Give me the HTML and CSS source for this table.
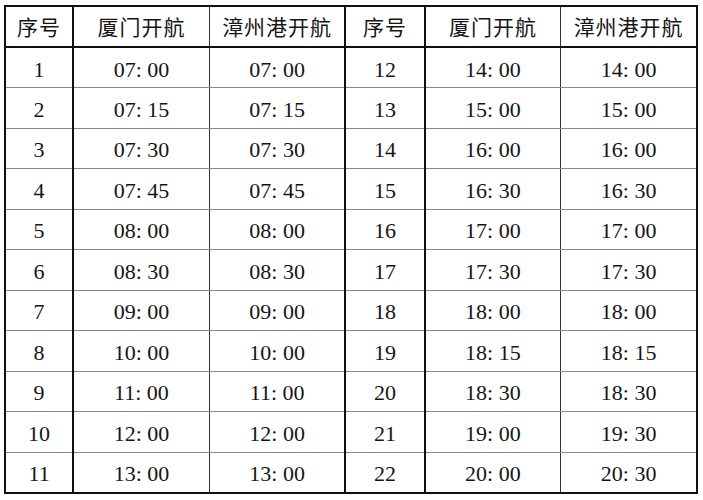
FILE: index.html
```html
<!DOCTYPE html>
<html lang="zh">
<head>
<meta charset="utf-8">
<title>航班时刻表</title>
<link rel="stylesheet" href="styles.css">
</head>
<body>
<table class="schedule">
  <colgroup>
    <col class="c-no"><col class="c-time"><col class="c-time"><col class="c-no2"><col class="c-time"><col class="c-time">
  </colgroup>
  <thead>
    <tr>
      <th class="sep">序号</th><th>厦门开航</th><th class="sep">漳州港开航</th>
      <th class="sep">序号</th><th>厦门开航</th><th>漳州港开航</th>
    </tr>
  </thead>
  <tbody>
    <tr><td class="sep">1</td><td>07: 00</td><td class="sep">07: 00</td><td class="sep">12</td><td>14: 00</td><td>14: 00</td></tr>
    <tr><td class="sep">2</td><td>07: 15</td><td class="sep">07: 15</td><td class="sep">13</td><td>15: 00</td><td>15: 00</td></tr>
    <tr><td class="sep">3</td><td>07: 30</td><td class="sep">07: 30</td><td class="sep">14</td><td>16: 00</td><td>16: 00</td></tr>
    <tr><td class="sep">4</td><td>07: 45</td><td class="sep">07: 45</td><td class="sep">15</td><td>16: 30</td><td>16: 30</td></tr>
    <tr><td class="sep">5</td><td>08: 00</td><td class="sep">08: 00</td><td class="sep">16</td><td>17: 00</td><td>17: 00</td></tr>
    <tr><td class="sep">6</td><td>08: 30</td><td class="sep">08: 30</td><td class="sep">17</td><td>17: 30</td><td>17: 30</td></tr>
    <tr><td class="sep">7</td><td>09: 00</td><td class="sep">09: 00</td><td class="sep">18</td><td>18: 00</td><td>18: 00</td></tr>
    <tr><td class="sep">8</td><td>10: 00</td><td class="sep">10: 00</td><td class="sep">19</td><td>18: 15</td><td>18: 15</td></tr>
    <tr><td class="sep">9</td><td>11: 00</td><td class="sep">11: 00</td><td class="sep">20</td><td>18: 30</td><td>18: 30</td></tr>
    <tr><td class="sep">10</td><td>12: 00</td><td class="sep">12: 00</td><td class="sep">21</td><td>19: 00</td><td>19: 30</td></tr>
    <tr><td class="sep">11</td><td>13: 00</td><td class="sep">13: 00</td><td class="sep">22</td><td>20: 00</td><td>20: 30</td></tr>
  </tbody>
</table>
</body>
</html>
```
FILE: styles.css
```css
html, body {
  margin: 0;
  padding: 0;
  background: #ffffff;
}

body {
  padding: 5px 0 0 4px;
  font-family: "Liberation Serif", "Noto Sans CJK SC", serif;
  color: #151515;
}

.schedule {
  border-collapse: collapse;
  table-layout: fixed;
  width: 694px;
  border: 2px solid #111;
}

.c-no { width: 68px; }
.c-time { width: 136px; }
.c-no2 { width: 79px; }

.schedule thead tr { height: 41px; }
.schedule tbody tr { height: 40.5px; }

.schedule th,
.schedule td {
  box-sizing: border-box;
  padding: 0;
  line-height: 1;
  text-align: center;
  vertical-align: middle;
  border-left: 1px solid #333;
  border-right: 1px solid #333;
  border-top: 1px solid #8a8a8a;
  border-bottom: 1px solid #8a8a8a;
}

.schedule th {
  font-family: "Noto Sans CJK SC", "Liberation Serif", serif;
  font-weight: 400;
  font-size: 21px;
  letter-spacing: 1px;
  border-bottom: 2px solid #111;
}

.schedule td {
  font-size: 22px;
  padding-top: 4px;
}

.schedule .sep {
  border-right: 2px solid #111;
}

.schedule tbody tr:last-child td {
  border-bottom: 2px solid #111;
}
```
